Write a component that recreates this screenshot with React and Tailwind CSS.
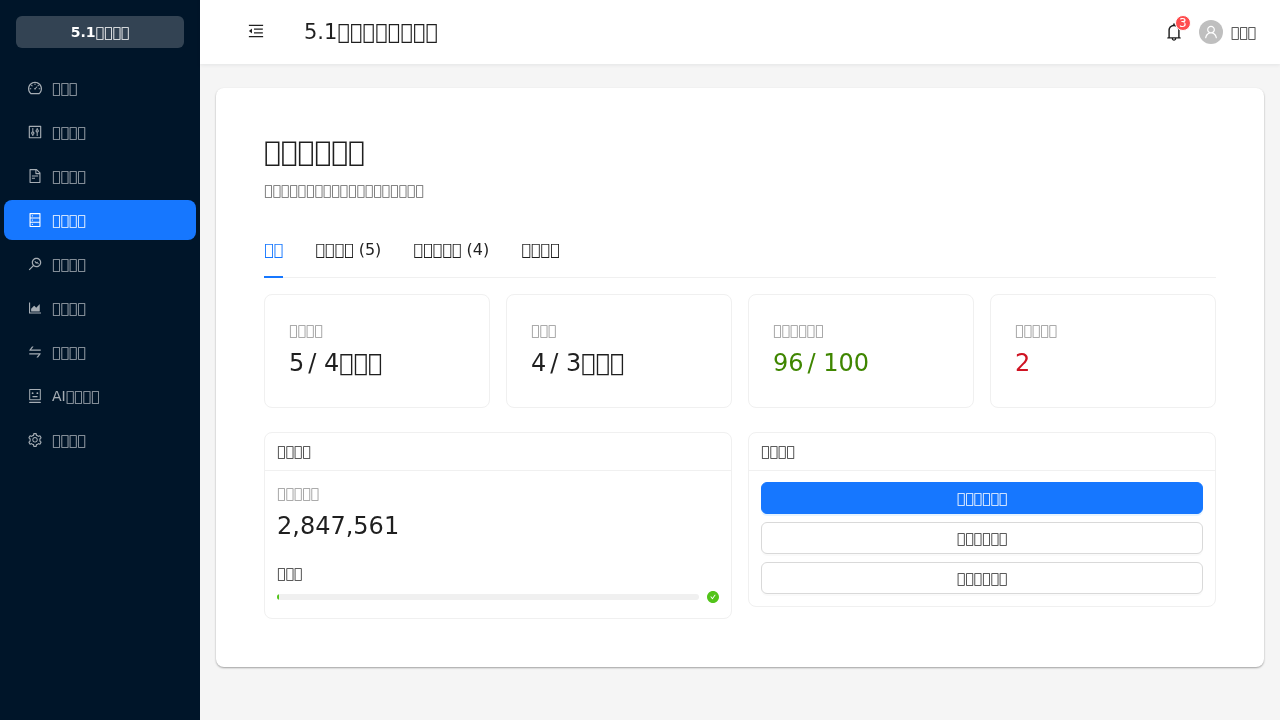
import { useState } from 'react';
import {
  AiOutlineDashboard,
  AiOutlineControl,
  AiOutlineFileText,
  AiOutlineDatabase,
  AiOutlineMonitor,
  AiOutlineAreaChart,
  AiOutlineSwap,
  AiOutlineRobot,
  AiOutlineSetting,
  AiOutlineMenuFold,
  AiOutlineBell,
  AiOutlineUser,
  AiFillCheckCircle,
} from 'react-icons/ai';

// The icons' artwork sits inside a 64-unit margin, which this view box trims.
const VIEW = '64 64 896 896';

// A run of n characters that the font has no glyph for, drawn as empty boxes.
const box = (n) => '\uE000'.repeat(n);

const menu = [
  { Icon: AiOutlineDashboard, label: box(3) },
  { Icon: AiOutlineControl, label: box(4) },
  { Icon: AiOutlineFileText, label: box(4) },
  { Icon: AiOutlineDatabase, label: box(4) },
  { Icon: AiOutlineMonitor, label: box(4) },
  { Icon: AiOutlineAreaChart, label: box(4) },
  { Icon: AiOutlineSwap, label: box(4) },
  { Icon: AiOutlineRobot, label: 'AI' + box(4) },
  { Icon: AiOutlineSetting, label: box(4) },
];

const tabs = [box(2), box(4) + ' (5)', box(5) + ' (4)', box(4)];

const stats = [
  { label: box(4), value: '5', suffix: '/ 4' + box(3), tone: 'text-black/88' },
  { label: box(3), value: '4', suffix: '/ 3' + box(3), tone: 'text-black/88' },
  { label: box(6), value: '96', suffix: '/ 100', tone: 'text-[#3f8600]' },
  { label: box(5), value: '2', suffix: '', tone: 'text-[#cf1322]' },
];

function Sidebar() {
  const [active, setActive] = useState(3);
  return (
    <aside className="w-50 shrink-0 bg-[#001529]">
      <div className="m-4 flex h-8 items-center justify-center rounded-md bg-white/20 text-sm font-bold text-white">
        5.1{box(4)}
      </div>
      <nav>
        <ul className="flex flex-col gap-1 px-1 py-1">
          {menu.map(({ Icon, label }, i) => (
            <li key={i}>
              <a
                href="#"
                onClick={(e) => {
                  e.preventDefault();
                  setActive(i);
                }}
                className={
                  'flex h-10 items-center gap-2.5 rounded-lg pl-6 text-sm leading-10 ' +
                  (i === active ? 'bg-[#1677ff] text-white' : 'text-white/65')
                }
              >
                <Icon viewBox={VIEW} className="size-3.5 shrink-0" />
                <span>{label}</span>
              </a>
            </li>
          ))}
        </ul>
      </nav>
    </aside>
  );
}

function Header() {
  return (
    <header className="relative flex h-16 items-center justify-between bg-white px-6 shadow-[0_1px_4px_rgba(0,21,41,0.08)]">
      <div className="flex items-center gap-4">
        <button type="button" aria-label="Menu" className="flex size-16 items-center justify-center pb-0.5">
          <AiOutlineMenuFold viewBox={VIEW} className="size-4" />
        </button>
        <h1 className="text-[21px] leading-8">5.1{box(8)}</h1>
      </div>
      <div className="flex items-center gap-4">
        <button type="button" aria-label="Notifications" className="relative">
          <AiOutlineBell viewBox={VIEW} className="size-4.5" />
          <span className="absolute -top-2 -right-2 flex size-4 items-center justify-center rounded-full border border-white bg-[#ff4d4f] text-xs text-white">
            3
          </span>
        </button>
        <div className="flex items-center gap-2">
          <span className="flex size-6 items-center justify-center rounded-full bg-[#bfbfbf] text-white">
            <AiOutlineUser viewBox={VIEW} className="size-3.5" />
          </span>
          <span className="text-sm">{box(3)}</span>
        </div>
      </div>
    </header>
  );
}

function Statistic({ label, value, suffix, tone }) {
  return (
    <div>
      <div className="mb-1 text-sm leading-[22px] text-black/45">{label}</div>
      <div className={'flex gap-1 pb-0.5 text-2xl leading-9 ' + tone}>
        <span>{value}</span>
        {suffix && <span>{suffix}</span>}
      </div>
    </div>
  );
}

function Panel({ title, children }) {
  return (
    <section className="rounded-lg border border-[#f0f0f0]">
      <h3 className="-mb-px border-b border-[#f0f0f0] px-3 py-2 text-sm leading-[21px]">{title}</h3>
      <div className="p-3">{children}</div>
    </section>
  );
}

function ActionButton({ primary, children }) {
  return (
    <button
      type="button"
      className={
        'h-8 w-full rounded-md border text-sm ' +
        (primary
          ? 'border-[#1677ff] bg-[#1677ff] text-white shadow-[0_2px_0_rgba(5,145,255,0.1)]'
          : 'border-[#d9d9d9] bg-white shadow-[0_2px_0_rgba(0,0,0,0.02)]')
      }
    >
      {children}
    </button>
  );
}

export default function App() {
  const [tab, setTab] = useState(0);
  const usage = 0.5;
  return (
    <div className="bg-[#f5f5f5]">
      <div className="flex min-h-screen font-['DejaVu_Sans',sans-serif] text-black/88 will-change-transform">
        <Sidebar />
        <div className="min-w-0 flex-1">
          <Header />
          <main className="mx-4 my-6 rounded-lg bg-white p-12 shadow-[0_1px_2px_rgba(0,0,0,0.35)]">
            <h2 className="text-[28px] leading-8">{box(6)}</h2>
            <p className="mt-3 text-sm leading-5 text-black/65">{box(19)}</p>

            <div role="tablist" className="mt-6.5 mb-4 flex gap-8 border-b border-[#f0f0f0]">
              {tabs.map((label, i) => (
                <button
                  key={i}
                  type="button"
                  role="tab"
                  aria-selected={i === tab}
                  onClick={() => setTab(i)}
                  className={
                    '-mb-px border-b-2 pt-3 pb-3.5 text-base leading-6 ' +
                    (i === tab ? 'border-[#1677ff] text-[#1677ff]' : 'border-transparent')
                  }
                >
                  {label}
                </button>
              ))}
            </div>

            <div className="grid grid-cols-4 gap-4">
              {stats.map((s, i) => (
                <div key={i} className="rounded-lg border border-[#f0f0f0] p-6">
                  <Statistic {...s} />
                </div>
              ))}
            </div>

            <div className="mt-6 grid grid-cols-2 items-start gap-4">
              <Panel title={box(4)}>
                <Statistic label={box(5)} value="2,847,561" tone="text-black/88" />
                <div className="mt-4 text-sm leading-[22px]">{box(3)}</div>
                <div className="flex h-[22px] items-center gap-2 pt-1">
                  <div
                    role="progressbar"
                    aria-valuenow={usage}
                    aria-valuemin={0}
                    aria-valuemax={100}
                    className="h-1.5 flex-1 overflow-hidden rounded-full bg-[#f0f0f0]"
                  >
                    <div className="h-full rounded-full bg-[#52c41a]" style={{ width: `${usage}%` }} />
                  </div>
                  <AiFillCheckCircle viewBox={VIEW} className="size-3 text-[#52c41a]" />
                </div>
              </Panel>
              <Panel title={box(4)}>
                <div className="flex flex-col gap-2">
                  <ActionButton primary>{box(6)}</ActionButton>
                  <ActionButton>{box(6)}</ActionButton>
                  <ActionButton>{box(6)}</ActionButton>
                </div>
              </Panel>
            </div>
          </main>
        </div>
      </div>
    </div>
  );
}
